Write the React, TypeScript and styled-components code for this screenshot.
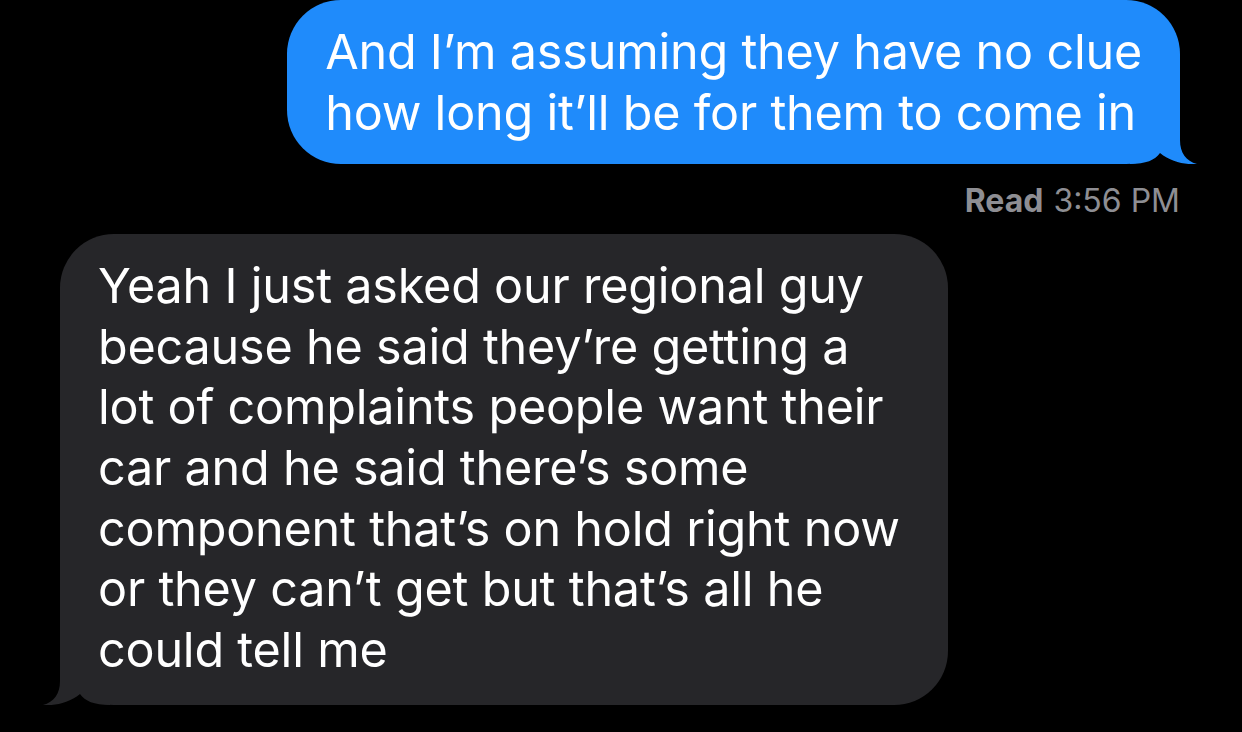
import React from "react";
import styled, { createGlobalStyle } from "styled-components";

const GlobalStyle = createGlobalStyle`
  html, body {
    margin: 0;
    padding: 0;
    background: #000;
  }
  body {
    width: 1242px;
    height: 732px;
    overflow: hidden;
    font-family: Inter, "Liberation Sans", sans-serif;
  }
`;

const Thread = styled.div`
  display: flex;
  flex-direction: column;
`;

const Row = styled.div<{ $out?: boolean }>`
  display: flex;
  justify-content: ${(p) => (p.$out ? "flex-end" : "flex-start")};
  padding: ${(p) => (p.$out ? "0 62px 0 0" : "0 0 0 60px")};
`;

const Bubble = styled.div<{ $out?: boolean }>`
  position: relative;
  background: ${(p) => (p.$out ? "#1f8bfb" : "#262629")};
  color: #fff;
  border-radius: 54px;
  padding: ${(p) => (p.$out ? "22px 38px 21px 38px" : "22px 38px 25px 38px")};
  font-size: 48.5px;
  line-height: 60.6px;
  letter-spacing: -0.2px;
  width: ${(p) => (p.$out ? "auto" : "812px")};
`;

const Line = styled.span`
  position: relative;
  z-index: 1;
  display: block;
  white-space: nowrap;
`;

const Tail = styled.svg<{ $out?: boolean }>`
  position: absolute;
  z-index: 0;
  bottom: 0;
  width: 67px;
  height: 54px;
  ${(p) => (p.$out ? "right: -17px;" : "left: -17px; transform: scaleX(-1);")}
`;

const Receipt = styled.div`
  display: flex;
  justify-content: flex-end;
  gap: 10px;
  padding: 18px 62px 0 0;
  height: 52px;
  font-size: 32px;
  line-height: 38px;
  color: #8e8e93;
`;

const ReceiptLabel = styled.span`
  font-weight: 700;
`;

const BubbleTail = ({ out, color }: { out?: boolean; color: string }) => (
  <Tail $out={out} viewBox="-50 -54 67 54">
    <path
      d="M0,-54 L0,-24 C0,-11 6,-3 17,0 C6,1 -9,-2 -20,-11 C-25,-4 -34,0 -50,0 L-50,-54 Z"
      fill={color}
    />
  </Tail>
);

const outgoing = [
  "And I’m assuming they have no clue",
  "how long it’ll be for them to come in",
];

const incoming = [
  "Yeah I just asked our regional guy",
  "because he said they’re getting a",
  "lot of complaints people want their",
  "car and he said there’s some",
  "component that’s on hold right now",
  "or they can’t get but that’s all he",
  "could tell me",
];

const App = () => {
  return (
    <>
      <GlobalStyle />
      <Thread>
        <Row $out>
          <Bubble $out>
            {outgoing.map((l, i) => (
              <Line key={i}>{l}</Line>
            ))}
            <BubbleTail out color="#1f8bfb" />
          </Bubble>
        </Row>
        <Receipt>
          <ReceiptLabel>Read</ReceiptLabel>
          <span>3:56 PM</span>
        </Receipt>
        <Row>
          <Bubble>
            {incoming.map((l, i) => (
              <Line key={i}>{l}</Line>
            ))}
            <BubbleTail color="#262629" />
          </Bubble>
        </Row>
      </Thread>
    </>
  );
};

export default App;
